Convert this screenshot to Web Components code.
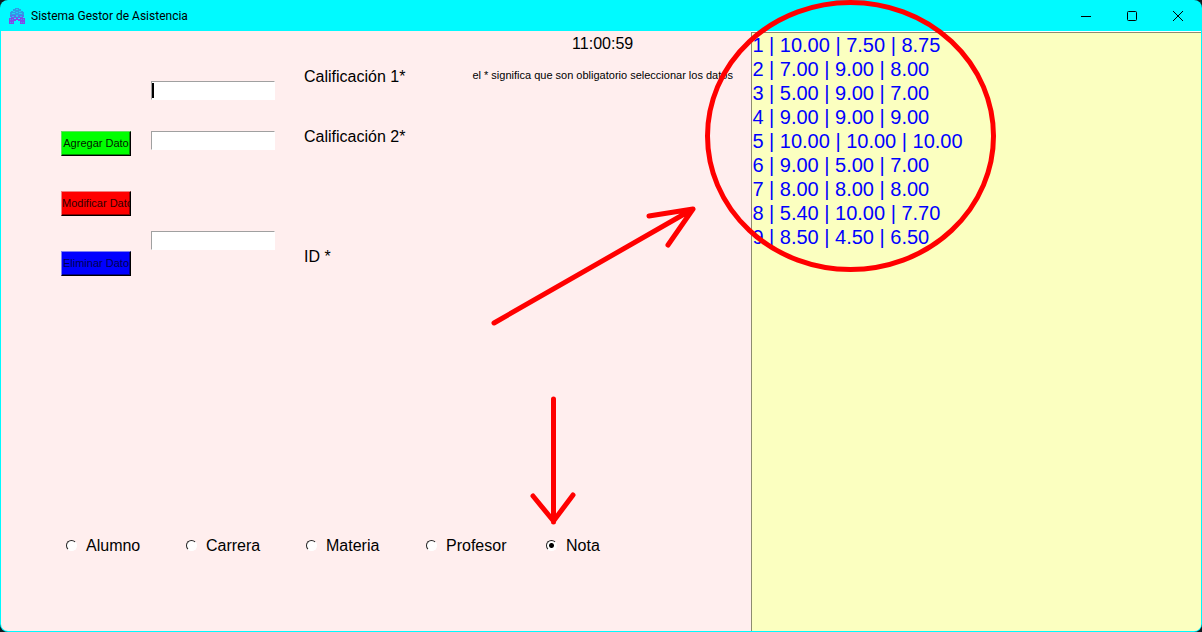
<!DOCTYPE html>
<html lang="es">
<head>
<meta charset="utf-8">
<title>Sistema Gestor de Asistencia</title>
<style>
  html, body { margin: 0; height: 100%; background: #101a20; }
  body { font-family: "Liberation Sans", Arial, sans-serif; font-size: 16px; color: #000; }
</style>
</head>
<body>
<app-window>
  <title-bar slot="title">Sistema Gestor de Asistencia</title-bar>
  <grade-form></grade-form>
  <record-list></record-list>
  <red-marks slot="marks"></red-marks>
</app-window>

<script>
const define = (name, html, setup) => {
  const template = document.createElement('template');
  template.innerHTML = html;
  customElements.define(name, class extends HTMLElement {
    constructor() {
      super();
      this.attachShadow({ mode: 'open' }).append(template.content.cloneNode(true));
    }
    connectedCallback() { if (setup) setup(this.shadowRoot, this); }
  });
};

define('app-window', `
  <style>
    :host { display: flex; flex-direction: column; position: relative; box-sizing: border-box;
      min-height: 100vh; border-radius: 8px; overflow: hidden; background: #00faff; }
    main { flex: 1; display: grid; grid-template-columns: 5fr 3fr; column-gap: 1px; margin: 0 1px 1px;
      background: #ffeeee; border-radius: 0 0 7px 7px; overflow: hidden; }
  </style>
  <slot name="title"></slot>
  <main><slot></slot></main>
  <slot name="marks"></slot>`);

define('title-bar', `
  <style>
    :host { display: flex; align-items: center; height: 31px; padding-left: 9px;
      font: 12px Roboto, "Open Sans", sans-serif; }
    .icon { width: 16px; height: 16px; margin-right: 6px; }
    h1 { flex: 1; margin: 0; font: inherit; white-space: nowrap; }
    button { width: 46px; height: 31px; padding: 0 2px 0 0; border: 0; background: none; display: grid; place-items: center; }
    button svg { width: 10px; height: 10px; fill: none; stroke: #000; }
  </style>
  <svg class="icon" viewBox="0 0 16 16" aria-hidden="true" shape-rendering="crispEdges">
    <path fill="#2f9be8" d="M6 0h4v1h2v2h2v1h1v3H1V4h1V3h2V1h2z"/>
    <path fill="#1fd0f4" d="M7 1h2v1H7zM4 3h2v1H4zM10 3h2v1h-2zM3 5h3v1H3zM10 5h3v1h-3zM7 4h2v1H7z"/>
    <path fill="#4f78ea" d="M1 7h14v2H1z"/>
    <path fill="#22c8f5" d="M3 8h2v1H3zM7 7h2v2H7zM11 8h2v1h-2z"/>
    <path fill="#8248e8" d="M0 10h5v1h2v-1h2v1h2v-1h5v6h-5v-3H9v-1H7v1H5v3H0z"/>
    <path fill="#6a60ea" d="M2 9h12v1H2z"/>
    <path fill="#3aa4f0" d="M1 11h1v1H1zM3 11h1v1H3zM1 14h1v1H1zM3 14h1v1H3zM12 11h1v1h-1zM14 11h1v1h-1zM12 14h1v1h-1zM14 14h1v1h-1z"/>
  </svg>
  <h1><slot></slot></h1>
  <button aria-label="Minimizar"><svg viewBox="0 0 10 10"><path d="M0 5.5h10"/></svg></button>
  <button aria-label="Maximizar"><svg viewBox="0 0 10 10"><rect x=".5" y=".5" width="9" height="9" rx="1"/></svg></button>
  <button aria-label="Cerrar"><svg viewBox="0 0 10 10"><path d="M0 0l10 10M10 0L0 10"/></svg></button>`);

define('action-button', `
  <style>
    :host { display: block; }
    button { display: block; box-sizing: border-box; width: 70px; height: 25px; padding: 0 0 2px;
      border: 1px solid; border-color: var(--light) #000 #000 var(--light);
      box-shadow: inset -1px -1px var(--dark); background: var(--face); color: var(--ink);
      font: 11px "Liberation Sans", Arial, sans-serif; white-space: nowrap; overflow: hidden; }
  </style>
  <button type="button"><slot></slot></button>`);

define('grade-form', `
  <style>
    :host { display: flex; flex-direction: column; }
    form { flex: 1; display: flex; flex-direction: column; }
    .top { display: flex; align-items: flex-start; padding-left: 60px; }
    .actions { display: grid; gap: 35px; margin-top: 100px; }
    .fields { display: grid; gap: 31px; margin: 50px 0 0 20px; }
    .labels { display: grid; gap: 40px; margin: 36px 0 0 29px; line-height: 20px; }
    .apart { margin-top: 50px; }
    .labels .apart { margin-top: 60px; }
    input[type=text] { box-sizing: border-box; width: 124px; height: 19px; padding: 0 3px; outline: 0;
      border: 1px solid; border-color: #a0a0a0 #fff #fff #a0a0a0; border-radius: 0;
      background-color: #fff; font: 14px "Liberation Sans", Arial, sans-serif; }
    /* block text cursor of the active field */
    input.active { background: linear-gradient(#000, #000) 0 1px / 2px 15px no-repeat #fff; }
    .info { margin: 3px 0 0 67px; text-align: center; white-space: nowrap; }
    time { display: block; line-height: 20px; }
    p { margin: 13px 0 0; font-size: 11px; line-height: 16px; }
    fieldset { display: flex; margin: auto 0 75px; padding: 0 0 0 65px; border: 0; min-width: 0; }
    fieldset label { display: flex; align-items: center; gap: 9px; width: 120px; line-height: 20px; }
    input[type=radio] { appearance: none; box-sizing: border-box; width: 11px; height: 11px; margin: 0 0 2px;
      border: 1px solid; border-color: #222 #fff #fff #222; border-radius: 50%; background: #fff; }
    input[type=radio]:checked { background: radial-gradient(circle, #000 0 2px, #fff 3px); }
  </style>
  <form>
    <div class="top">
      <div class="actions">
        <action-button style="--face:#00ff00;--light:#60e060;--dark:#009000;--ink:#001800">Agregar Dato</action-button>
        <action-button style="--face:#ff0000;--light:#f08080;--dark:#900000;--ink:#300000">Modificar Dato</action-button>
        <action-button style="--face:#0000ff;--light:#8080f0;--dark:#000090;--ink:#000050">Eliminar Dato</action-button>
      </div>
      <div class="fields">
        <input class="active" type="text" id="c1">
        <input type="text" id="c2">
        <input class="apart" type="text" id="ident">
      </div>
      <div class="labels">
        <label for="c1">Calificación 1*</label>
        <label for="c2">Calificación 2*</label>
        <label class="apart" for="ident">ID *</label>
      </div>
      <div class="info">
        <time>11:00:59</time>
        <p>el * significa que son obligatorio seleccionar los datos</p>
      </div>
    </div>
    <fieldset aria-label="Tabla">
      <label><input type="radio" name="tabla">Alumno</label>
      <label><input type="radio" name="tabla">Carrera</label>
      <label><input type="radio" name="tabla">Materia</label>
      <label><input type="radio" name="tabla">Profesor</label>
      <label><input type="radio" name="tabla" checked>Nota</label>
    </fieldset>
  </form>`);

const records = [
  '1 | 10.00 | 7.50 | 8.75',
  '2 | 7.00 | 9.00 | 8.00',
  '3 | 5.00 | 9.00 | 7.00',
  '4 | 9.00 | 9.00 | 9.00',
  '5 | 10.00 | 10.00 | 10.00',
  '6 | 9.00 | 5.00 | 7.00',
  '7 | 8.00 | 8.00 | 8.00',
  '8 | 5.40 | 10.00 | 7.70',
  '9 | 8.50 | 4.50 | 6.50',
];

define('record-list', `
  <style>
    :host { display: flex; border-top: 1px solid #fff; }
    select { flex: 1; appearance: none; box-sizing: border-box; margin: 0; padding: 1px 0 0; outline: 0;
      border: solid #8c8c70; border-width: 1px 0 0 1px; border-radius: 0;
      background: #fbffc0; color: #0000ff; font: 20px "Liberation Sans", Arial, sans-serif; overflow: hidden; }
    option { padding: 0; min-height: 24px; line-height: 24px; color: #0000ff; }
  </style>
  <select size="9" aria-label="Registros"></select>`,
  root => {
    root.querySelector('select').replaceChildren(...records.map(text => new Option(text)));
  });

define('red-marks', `
  <style>
    :host { position: absolute; inset: 0; pointer-events: none; }
    svg { display: block; width: 100%; height: 100%; fill: none; stroke: #ff0000;
      stroke-width: 5px; stroke-linecap: round; stroke-linejoin: round; }
  </style>
  <svg aria-hidden="true">
    <ellipse cx="850.5" cy="136" rx="143" ry="133.5"/>
    <path d="M494 323L693 209M649 216L693 209L668 245"/>
    <path d="M553.5 399V522M533 496L553.5 521L573 495"/>
  </svg>`);
</script>
</body>
</html>
